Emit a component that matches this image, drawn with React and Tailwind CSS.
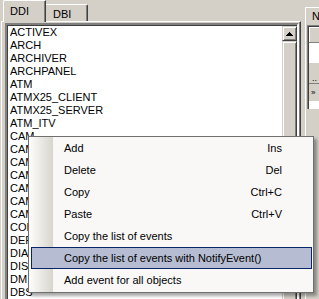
const items = [
  "ACTIVEX", "ARCH", "ARCHIVER", "ARCHPANEL", "ATM", "ATMX25_CLIENT", "ATMX25_SERVER", "ATM_ITV",
  "CAM", "CAM", "CAM", "CAM", "CAM", "CAM", "CAM", "COM", "DEF", "DIA", "DIS", "DM", "DBS",
];

const menu = [
  { label: "Add", key: "Ins" },
  { label: "Delete", key: "Del" },
  { label: "Copy", key: "Ctrl+C" },
  { label: "Paste", key: "Ctrl+V" },
  { label: "Copy the list of events", key: "" },
  { label: "Copy the list of events with NotifyEvent()", key: "", active: true },
  { label: "Add event for all objects", key: "" },
];

export default function App() {
  return (
    <div className="relative flex h-[299px] w-[319px] overflow-hidden bg-[#d4d0c8] font-['Liberation_Sans',Arial,sans-serif] text-[11px] leading-[13px] text-black">
      {/* left pane */}
      <div className="flex w-[301px] shrink-0 flex-col">
        <div className="flex h-[23px] items-end pl-[3px]">
          <div className="relative z-10 -mb-px h-[22px] w-[43px] rounded-tl-[2px] border-l border-t border-r border-l-white border-t-white border-r-[#404040] bg-[#d4d0c8] pl-[6px] pt-[4px] shadow-[inset_-1px_0_#808080]">
            DDI
          </div>
          <div className="h-[17px] w-[42px] rounded-tr-[2px] border-t border-r border-t-white border-r-[#404040] pl-[7px] pt-[3px] shadow-[inset_-1px_0_#808080]">
            DBI
          </div>
        </div>
        <div className="ml-px flex-1 border-l border-t border-r border-l-white border-t-white border-r-[#404040] pl-[3px] pt-px shadow-[inset_-1px_0_#808080]">
          <div className="flex h-[300px] w-[294px] border-2 border-t-[#808080] border-l-[#808080] border-r-white border-b-white bg-white shadow-[inset_1px_1px_#404040,inset_-1px_-1px_#d4d0c8]">
            <div className="flex-1 overflow-hidden pl-[3px] pt-px">
              {items.map((t, i) => (
                <div key={i} className="h-[13px] whitespace-nowrap">
                  {t}
                </div>
              ))}
            </div>
            <div className="mt-px flex w-[15px] shrink-0 flex-col">
              <div className="flex h-[15px] items-center justify-center border border-t-[#d4d0c8] border-l-[#d4d0c8] border-r-[#404040] border-b-[#404040] bg-[#d4d0c8] shadow-[inset_1px_1px_#fff,inset_-1px_-1px_#808080]">
                <svg width="7" height="4" viewBox="0 0 7 4">
                  <path d="M3 0h1v1h1v1h1v1h1v1H0V3h1V2h1V1h1z" fill="#000" />
                </svg>
              </div>
              <div className="h-[260px] border border-t-[#d4d0c8] border-l-[#d4d0c8] border-r-[#404040] border-b-[#404040] bg-[#d4d0c8] shadow-[inset_1px_1px_#fff,inset_-1px_-1px_#808080]" />
            </div>
          </div>
        </div>
      </div>

      {/* right pane (cut off) */}
      <div className="flex flex-1 flex-col pl-[4px]">
        <div className="flex h-[23px] items-end">
          <div className="relative z-10 -mb-px h-[17px] w-[30px] border-l border-t border-l-white border-t-white bg-[#d4d0c8] pl-[6px] pt-[2px]">
            N
          </div>
        </div>
        <div className="flex-1 border-l border-t border-l-white border-t-white pl-px pt-px">
          <div className="flex h-[84px] flex-col border-l border-t border-l-[#808080] border-t-[#808080] bg-white shadow-[inset_1px_1px_#404040]">
            <div className="ml-px mt-px h-[16px] border-b border-[#808080] bg-[#d4d0c8] shadow-[inset_1px_1px_#fff]" />
            <div className="ml-px h-[21px] border-b border-[#d4d0c8]" />
            <div className="ml-px flex h-[20px] items-end border-b border-[#808080] bg-[#d4d0c8] pl-[3px] text-[9px] leading-[10px]">
              ..
            </div>
            <div className="ml-px flex h-[17px] items-center bg-[#d4d0c8] pl-[2px] text-[8px] leading-[9px]">
              »
            </div>
          </div>
        </div>
      </div>

      {/* context menu */}
      <div className="absolute left-[28px] top-[136px] w-[286px] border border-[#6f6f6f] bg-[linear-gradient(to_right,#fdfdfc_0px,#d8d5cd_24px,#f9f8f7_24px)] pb-px shadow-[3px_3px_3px_rgba(0,0,0,0.35)]">
        {menu.map((m, i) => (
          <div
            key={i}
            className={
              m.active
                ? "ml-[2px] mr-px flex h-[22px] items-center border border-[#0a246a] bg-[#b6bdd2] pl-[32px] pr-[29px]"
                : "ml-[2px] mr-px flex h-[22px] items-center border border-transparent pl-[32px] pr-[29px]"
            }
          >
            <span className="flex-1 whitespace-nowrap">{m.label}</span>
            <span className="whitespace-nowrap">{m.key}</span>
          </div>
        ))}
      </div>
    </div>
  );
}
